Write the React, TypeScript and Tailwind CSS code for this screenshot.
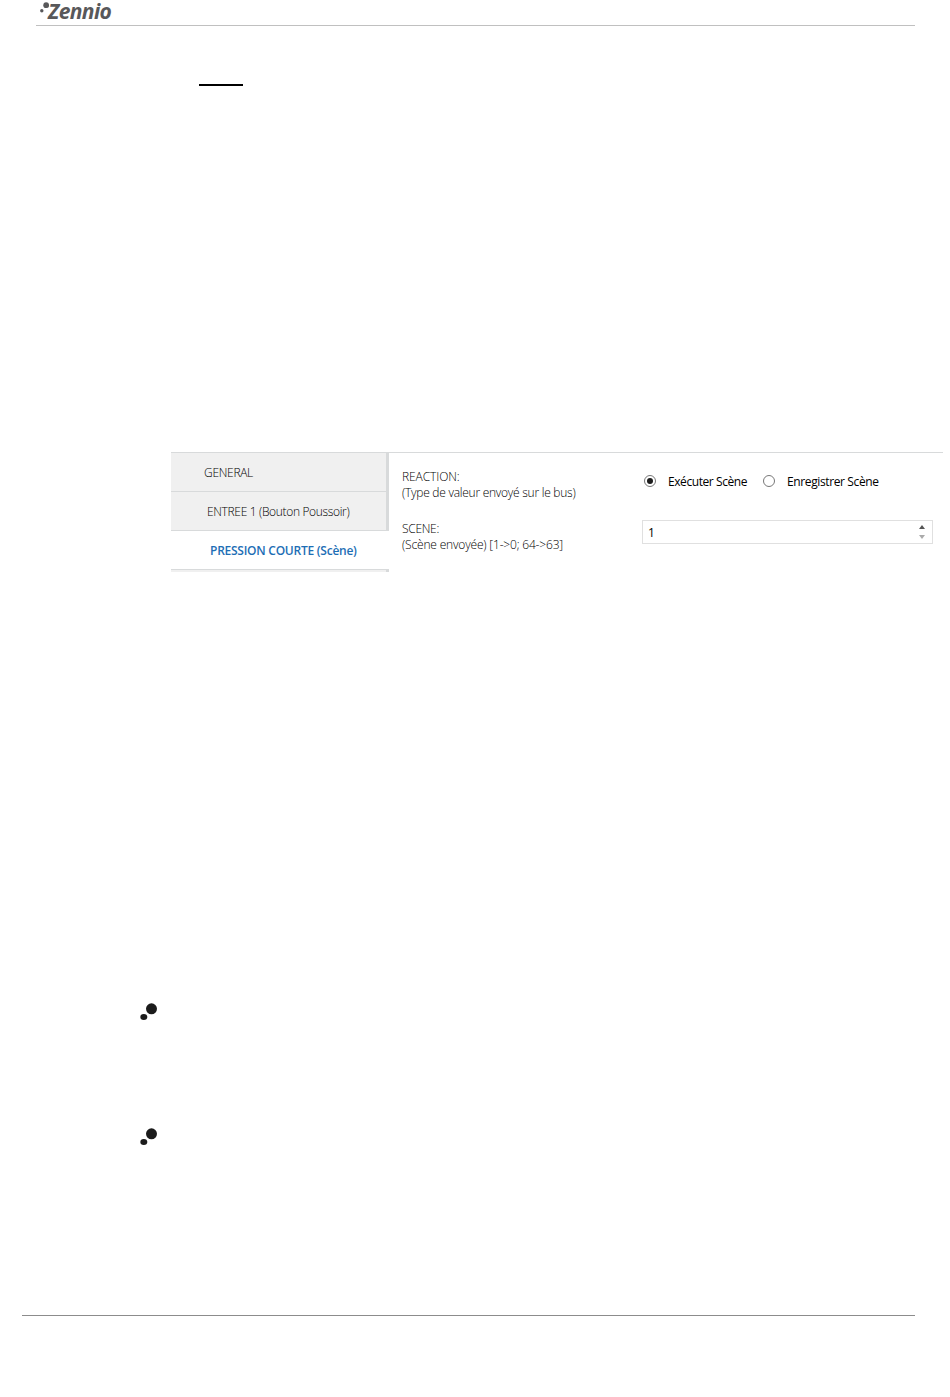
import { useState } from "react";

function Radio({ label, checked, onSelect, className }: { label: string; checked: boolean; onSelect: () => void; className: string }) {
  return (
    <button type="button" role="radio" aria-checked={checked} onClick={onSelect} className="flex h-4 items-center">
      <svg className="h-3 w-3 shrink-0" viewBox="0 0 12 12">
        <circle cx="6" cy="6" r="5.5" fill="#fff" stroke="#777" />
        {checked && <circle cx="6" cy="6" r="3" fill="#1c1c1c" />}
      </svg>
      <span className={`ml-3 whitespace-nowrap pt-0.5 text-left text-black ${className}`}>{label}</span>
    </button>
  );
}

function Bullet() {
  return (
    <svg className="ml-[140px] block h-[18px] w-[18px]" viewBox="0 0 18 18" fill="#1b1b1b">
      <circle cx="11.5" cy="5.8" r="5.5" />
      <ellipse cx="3.8" cy="14" rx="3.5" ry="3" />
    </svg>
  );
}

export default function App() {
  const [reaction, setReaction] = useState(0);
  return (
    <div className="h-[1397px] w-[950px] bg-white font-['Open_Sans',sans-serif] text-[12px] leading-4 text-black">
      <header className="ml-9 flex h-[26px] w-[879px] items-start border-b border-[#c0c0c0] pl-1">
        <svg className="mt-0.5 h-[11px] w-[9px] shrink-0" viewBox="0 0 9 11" fill="#58585a">
          <circle cx="6.2" cy="3.2" r="2.9" />
          <circle cx="1.8" cy="8.7" r="1.7" />
        </svg>
        <span className="-ml-px text-[21px] font-bold italic leading-[23px] tracking-[-0.6px] text-[#58585a]">Zennio</span>
      </header>
      <div className="ml-[199px] mt-[58px] h-0.5 w-11 bg-black" />

      <section className="ml-[171px] mt-[366px] flex h-[120px] w-[772px] border-t border-[#d8dadb]">
        <nav className="flex w-[218px] shrink-0 flex-col">
          <div className="flex h-[39px] items-center border-b border-r-[3px] border-[#d8dadb] bg-[#f0f0f0] pl-[33px] pt-0.5">
            <span className="font-light tracking-[-0.3px]">GENERAL</span>
          </div>
          <div className="flex h-[38px] items-center border-r-[3px] border-[#d8dadb] bg-[#f0f0f0] pl-9 pt-0.5">
            <span className="whitespace-nowrap font-light tracking-[-0.34px]">ENTREE 1 (Bouton Poussoir)</span>
          </div>
          <div className="flex h-10 items-center border-y border-[#d8dadb] pl-[39px] pt-0.5">
            <span className="whitespace-nowrap font-semibold tracking-[-0.25px] text-[#1d6eb5]">PRESSION COURTE (Scène)</span>
          </div>
          <div className="h-0.5 border-r-[3px] border-[#d8dadb] bg-[#f0f0f0]" />
        </nav>

        <div className="flex pl-[13px] pt-4">
          <div className="flex w-60 shrink-0 flex-col gap-5 whitespace-nowrap font-light">
            <div>
              <div className="tracking-[-0.1px]">REACTION:</div>
              <div className="tracking-[-0.26px]">(Type de valeur envoyé sur le bus)</div>
            </div>
            <div>
              <div className="tracking-[-0.3px]">SCENE:</div>
              <div className="tracking-[-0.18px]">(Scène envoyée) [1-&gt;0; 64-&gt;63]</div>
            </div>
          </div>
          <div className="w-[291px]">
            <div role="radiogroup" className="flex pl-0.5 pt-1">
              <div className="w-[119px]">
                <Radio label="Exécuter Scène" checked={reaction === 0} onSelect={() => setReaction(0)} className="tracking-[-0.42px]" />
              </div>
              <Radio label="Enregistrer Scène" checked={reaction === 1} onSelect={() => setReaction(1)} className="tracking-[-0.38px]" />
            </div>
            <div className="mt-[31px] flex h-6 w-[291px] items-center justify-between border border-[#e0e0e0] pl-[5px] pr-[7px]">
              <span className="pt-0.5">1</span>
              <svg className="h-[14px] w-1.5" viewBox="0 0 6 14">
                <path d="M0 4 3 0 6 4Z" fill="#555" />
                <path d="M0 10 3 14 6 10Z" fill="#aaa" />
              </svg>
            </div>
          </div>
        </div>
      </section>

      <div className="mt-[431px]"><Bullet /></div>
      <div className="mt-[107px]"><Bullet /></div>
      <footer className="ml-[22px] mt-[169px] w-[893px] border-t border-[#8c8c8c]" />
    </div>
  );
}
